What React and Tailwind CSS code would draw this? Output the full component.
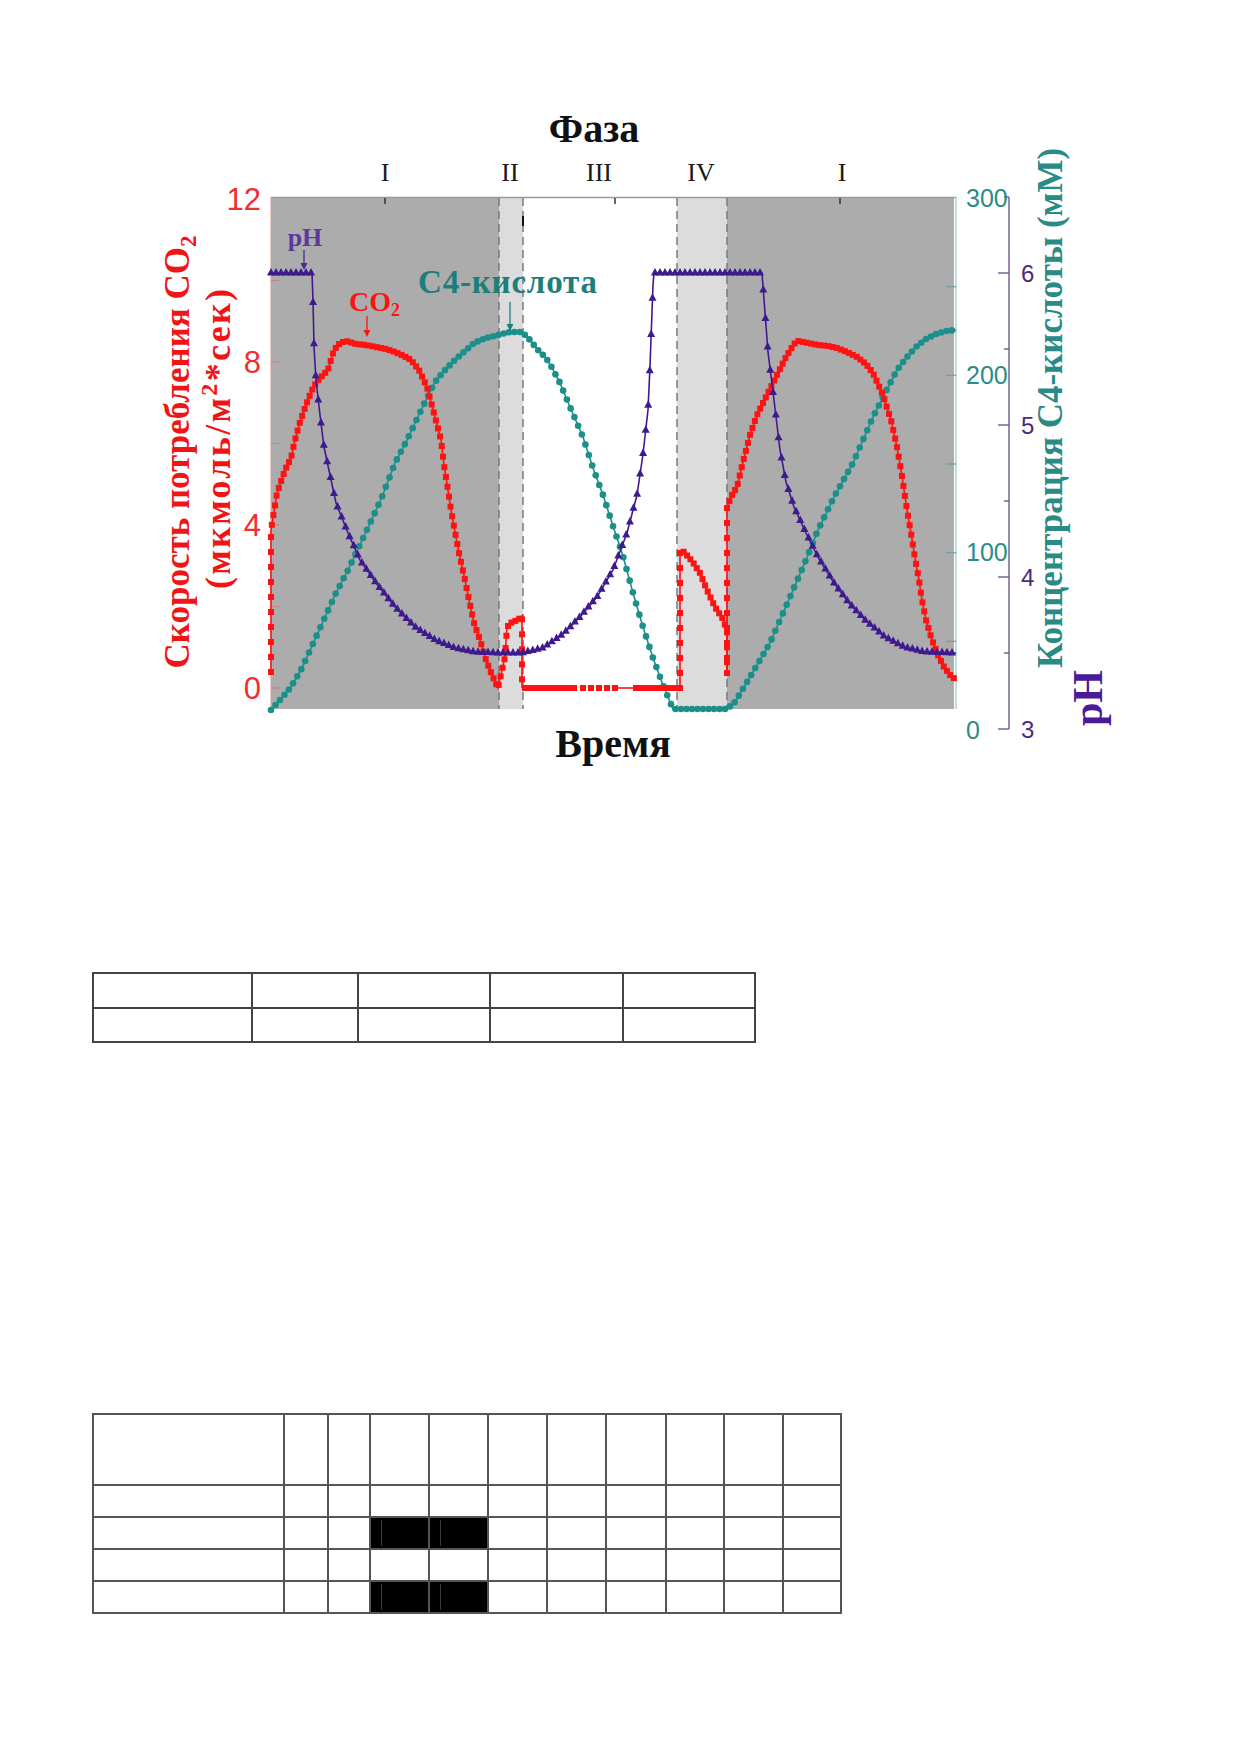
import React from 'react'

// chart drawn in page pixels: plot box 271..956 x 197..709
const RED_A = [
  [271, 672], [271, 530], [277, 493], [285, 470], [291, 458], [295, 440], [300, 422], [306, 405],
  [312, 390], [316, 383], [322, 376], [328, 370], [334, 350], [340, 343], [346, 341], [356, 344],
  [366, 345], [376, 347], [386, 349], [395, 352], [404, 356], [411, 360], [419, 370], [427, 387],
  [435, 417], [441, 440], [444, 465], [448, 490], [451, 510], [455, 532], [459, 553], [465, 580],
  [469, 600], [474, 623], [480, 640], [486, 660], [492, 675], [498, 688], [502, 670], [505, 657],
  [507, 627], [512, 622], [518, 620], [522, 616], [522, 688],
]
const RED_B = [
  [680, 688], [680, 551], [683, 551], [692, 561], [700, 573], [707, 590], [715, 607], [723, 619],
  [727, 631], [727, 673],
]
const RED_C = [
  [727, 673], [727, 507], [732, 495], [737, 487], [743, 462], [750, 435], [757, 415], [762, 405],
  [768, 393], [776, 377], [786, 357], [794, 344], [798, 341], [808, 343], [818, 345], [828, 346],
  [837, 348], [847, 352], [857, 357], [866, 364], [873, 373], [883, 395], [891, 420], [897, 447],
  [901, 470], [903, 483], [907, 510], [911, 533], [915, 558], [919, 580], [922, 600], [926, 620],
  [932, 640], [938, 655], [944, 667], [950, 675], [956, 680],
]
const TEAL = [
  [271, 710], [280, 700], [291, 687], [302, 668], [316, 637], [336, 593], [348, 570], [366, 532],
  [382, 497], [395, 463], [407, 440], [425, 402], [435, 382], [445, 370], [455, 360], [465, 351],
  [474, 343], [486, 338], [498, 335], [510, 332], [522, 332], [530, 340], [537, 349], [546, 358],
  [551, 366], [560, 383], [570, 407], [583, 437], [593, 468], [603, 495], [613, 526], [623, 556],
  [633, 593], [643, 627], [653, 658], [663, 685], [673, 709], [727, 709], [735, 702], [750, 677],
  [770, 643], [790, 597], [806, 560], [818, 530], [834, 497], [853, 463], [873, 417], [883, 397],
  [897, 370], [907, 357], [917, 346], [926, 339], [936, 334], [946, 331], [956, 330],
]
const PH = [
  [271, 273], [312, 273], [313, 300], [314, 347], [316, 380], [320, 415], [324, 447], [330, 475],
  [336, 503], [348, 533], [360, 560], [376, 583], [395, 607], [415, 627], [435, 640], [455, 648],
  [474, 652], [498, 653], [522, 653], [543, 648], [563, 634], [580, 617], [597, 597], [613, 570],
  [627, 533], [637, 495], [643, 454], [648, 410], [650, 366], [653, 285], [654, 273], [762, 273],
  [768, 352], [774, 400], [780, 450], [786, 482], [794, 507], [806, 533], [818, 557], [834, 583],
  [849, 603], [865, 620], [885, 637], [904, 647], [924, 652], [956, 653],
]

// markers follow the time axis, so steep parts get sparse markers
function sample(points, step, wy) {
  const out = []
  let rem = 0
  for (let i = 0; i < points.length - 1; i++) {
    const [x1, y1] = points[i]
    const [x2, y2] = points[i + 1]
    const len = Math.abs(x2 - x1) + Math.abs(y2 - y1) * wy
    if (len === 0) continue
    let pos = rem
    while (pos <= len) {
      const k = pos / len
      out.push([x1 + (x2 - x1) * k, y1 + (y2 - y1) * k])
      pos += step
    }
    rem = pos - len
  }
  return out
}

const pts = (p) => p.map(([x, y]) => `${x},${y}`).join(' ')

const RED = '#ff1212'
const TEAL_C = '#1b8f89'
const PURPLE = '#3f1a8e'

function Arrow({ x, y1, y2, color }) {
  return (
    <g>
      <line x1={x} y1={y1} x2={x} y2={y2 - 5} stroke={color} strokeWidth="1.3" />
      <path d={`M${x - 3.5} ${y2 - 7} L${x + 3.5} ${y2 - 7} L${x} ${y2} Z`} fill={color} />
    </g>
  )
}

function Chart() {
  const redMarks = [...sample(RED_A, 4.5, 0.3), ...sample(RED_B, 4.5, 0.3), ...sample(RED_C, 4.5, 0.3)]
  const tealMarks = sample(TEAL, 5.5, 0.2)
  const phMarks = sample(PH, 5, 0.1)
  const serif = 'Liberation Serif, Times New Roman, serif'
  const sans = 'Liberation Sans, Arial, sans-serif'

  return (
    <svg width="980" height="670" viewBox="140 100 980 670" className="block ml-[140px]">
      {/* phase backgrounds */}
      <rect x="271" y="197" width="228" height="512" fill="#acacac" />
      <rect x="499" y="197" width="24" height="512" fill="#dcdcdc" />
      <rect x="677" y="197" width="50" height="512" fill="#dcdcdc" />
      <rect x="727" y="197" width="227" height="512" fill="#acacac" />
      <line x1="271" y1="197.5" x2="956" y2="197.5" stroke="#9a9a9a" strokeWidth="1.5" />
      {[499, 523, 677, 727].map((x) => (
        <line key={x} x1={x} y1="198" x2={x} y2="709" stroke="#7a7a7a" strokeWidth="1.5" strokeDasharray="8 5" />
      ))}
      {[385, 615, 840].map((x) => (
        <line key={x} x1={x} y1="198" x2={x} y2="204" stroke="#333" strokeWidth="1.5" />
      ))}
      <line x1="523" y1="216" x2="523" y2="226" stroke="#111" strokeWidth="2" />

      {/* left axis */}
      <line x1="271" y1="197" x2="271" y2="709" stroke="#dba2a2" strokeWidth="1.2" />
      {[0, 2, 4, 6, 8, 10].map((v) => (
        <line key={v} x1="271" y1={688 - v * 40.75} x2="279" y2={688 - v * 40.75} stroke="#c98080" strokeWidth="1.2" />
      ))}
      {[0, 4, 8, 12].map((v) => (
        <text key={v} x="261" y={688 - v * 40.75 + 11} textAnchor="end" fontFamily={sans} fontSize="31" fill="#ee3030">
          {v}
        </text>
      ))}

      {/* right C4 axis */}
      <line x1="956" y1="197" x2="956" y2="709" stroke="#8fc9c6" strokeWidth="1.2" />
      {[50, 100, 150, 200, 250].map((c) => (
        <line key={c} x1="946" y1={730 - c * 1.7733} x2="956" y2={730 - c * 1.7733} stroke="#7a9c9a" strokeWidth="1.2" />
      ))}
      {[0, 100, 200, 300].map((c) => (
        <text key={c} x="966" y={730 - c * 1.7733 + 8.5} fontFamily={sans} fontSize="25" fill="#2b8c88">
          {c}
        </text>
      ))}

      {/* pH axis */}
      <line x1="1009" y1="197" x2="1009" y2="729" stroke="#6b5b8b" strokeWidth="1.4" />
      <line x1="1004" y1="197" x2="1009" y2="197" stroke="#6b5b8b" strokeWidth="1.4" />
      {[3, 3.5, 4, 4.5, 5, 5.5, 6].map((p) => (
        <line
          key={p}
          x1={p % 1 === 0 ? 998 : 1004}
          y1={729 - (p - 3) * 152}
          x2="1009"
          y2={729 - (p - 3) * 152}
          stroke="#6b5b8b"
          strokeWidth="1.4"
        />
      ))}
      {[3, 4, 5, 6].map((p) => (
        <text key={p} x="1021" y={729 - (p - 3) * 152 + 8.5} fontFamily={sans} fontSize="24" fill="#4c2a7e">
          {p}
        </text>
      ))}

      {/* curves */}
      <polyline points={pts(TEAL)} fill="none" stroke={TEAL_C} strokeWidth="1.6" />
      {tealMarks.map(([x, y], i) => (
        <circle key={i} cx={x} cy={y} r="3.3" fill={TEAL_C} />
      ))}

      <polyline points={pts(RED_A)} fill="none" stroke={RED} strokeWidth="1.6" />
      <polyline points={pts(RED_B)} fill="none" stroke={RED} strokeWidth="1.6" />
      <polyline points={pts(RED_C)} fill="none" stroke={RED} strokeWidth="1.6" />
      <rect x="522" y="685" width="55" height="6" fill={RED} />
      {[580, 588, 596, 604, 612].map((x) => (
        <rect key={x} x={x} y="685" width="6" height="6" fill={RED} />
      ))}
      <line x1="618" y1="688" x2="633" y2="688" stroke={RED} strokeWidth="1.6" />
      <rect x="633" y="685" width="47" height="6" fill={RED} />
      {redMarks.map(([x, y], i) => (
        <rect key={i} x={x - 3} y={y - 3} width="6" height="6" fill={RED} />
      ))}

      <polyline points={pts(PH)} fill="none" stroke={PURPLE} strokeWidth="1.6" />
      {phMarks.map(([x, y], i) => (
        <path key={i} d={`M${x} ${y - 5} L${x + 4} ${y + 2.5} L${x - 4} ${y + 2.5} Z`} fill={PURPLE} />
      ))}

      {/* curve labels */}
      <text x="305" y="246" textAnchor="middle" fontFamily={serif} fontWeight="700" fontSize="26" fill="#5b3a9c">
        pH
      </text>
      <Arrow x={304} y1={250} y2={270} color="#4b2a8c" />
      <text x="349" y="311" fontFamily={serif} fontWeight="700" fontSize="28" fill={RED}>
        CO<tspan fontSize="18" dy="5">2</tspan>
      </text>
      <Arrow x={367} y1={316} y2={337} color={RED} />
      <text x="418" y="293" textLength="179" fontFamily={serif} fontWeight="700" fontSize="33" fill="#1e7f7a">
        C4-кислота
      </text>
      <Arrow x={510} y1={302} y2={331} color="#1e7f7a" />

      {/* titles */}
      <text x="594" y="142" textAnchor="middle" fontFamily={serif} fontWeight="700" fontSize="40" fill="#111">
        Фаза
      </text>
      {[
        ['I', 385],
        ['II', 510],
        ['III', 599],
        ['IV', 701],
        ['I', 842],
      ].map(([t, x], i) => (
        <text key={i} x={x} y="181" textAnchor="middle" fontFamily={serif} fontSize="26" fill="#1a1a1a">
          {t}
        </text>
      ))}
      <text x="613" y="757" textAnchor="middle" fontFamily={serif} fontWeight="700" fontSize="40" fill="#111">
        Время
      </text>

      {/* axis titles */}
      <text
        x="189"
        y="452"
        transform="rotate(-90 189 452)"
        textAnchor="middle"
        fontFamily={serif}
        fontWeight="700"
        fontSize="35"
        fill="#f01414"
      >
        Скорость потребления CO<tspan fontSize="23" dy="7">2</tspan>
      </text>
      <text
        x="230"
        y="439"
        transform="rotate(-90 230 439)"
        textAnchor="middle"
        textLength="300"
        fontFamily={serif}
        fontWeight="700"
        fontSize="36"
        fill="#f01414"
      >
        (мкмоль/м<tspan fontSize="24" dy="-13">2</tspan>
        <tspan dy="13">*сек)</tspan>
      </text>
      <text
        x="1062"
        y="408"
        transform="rotate(-90 1062 408)"
        textAnchor="middle"
        fontFamily={serif}
        fontWeight="700"
        fontSize="35"
        fill="#2a8a85"
      >
        Концентрация C4-кислоты (мМ)
      </text>
      <text
        x="1102"
        y="698"
        transform="rotate(-90 1102 698)"
        textAnchor="middle"
        fontFamily={serif}
        fontWeight="700"
        fontSize="42"
        fill="#4b1a9b"
      >
        pH
      </text>
    </svg>
  )
}

const T1_COLS = ['w-[159px]', 'w-[106px]', 'w-[132px]', 'w-[133px]', 'w-[132px]']
const T1_ROWS = ['h-[35px]', 'h-[34px]']
const T2_COLS = [
  'w-[191px]', 'w-[44px]', 'w-[42px]', 'w-[59px]', 'w-[59px]', 'w-[59px]',
  'w-[59px]', 'w-[60px]', 'w-[58px]', 'w-[59px]', 'w-[58px]',
]
const T2_ROWS = ['h-[71px]', 'h-[32px]', 'h-[32px]', 'h-[32px]', 'h-[32px]']

export default function App() {
  return (
    <div className="flex h-[1754px] w-[1240px] flex-col items-start overflow-hidden bg-white pt-[100px]">
      <Chart />

      {/* empty table 1 */}
      <table className="ml-[92px] mt-[202px] border-collapse">
        <tbody>
          {T1_ROWS.map((h, r) => (
            <tr key={r} className={h}>
              {T1_COLS.map((w, c) => (
                <td key={c} className={`${w} border-2 border-[#444] p-0`} />
              ))}
            </tr>
          ))}
        </tbody>
      </table>

      {/* empty table 2 with two filled blocks */}
      <table className="ml-[92px] mt-[370px] border-collapse">
        <tbody>
          {T2_ROWS.map((h, r) => (
            <tr key={r} className={h}>
              {T2_COLS.map((w, c) => {
                const dark = (r === 2 || r === 4) && (c === 3 || c === 4)
                return (
                  <td key={c} className={`${w} border-2 border-[#555] p-0 ${dark ? 'bg-black' : ''}`}>
                    {dark && <div className="ml-[10px] h-[26px] w-px bg-[#3a3a3a]" />}
                  </td>
                )
              })}
            </tr>
          ))}
        </tbody>
      </table>
    </div>
  )
}
